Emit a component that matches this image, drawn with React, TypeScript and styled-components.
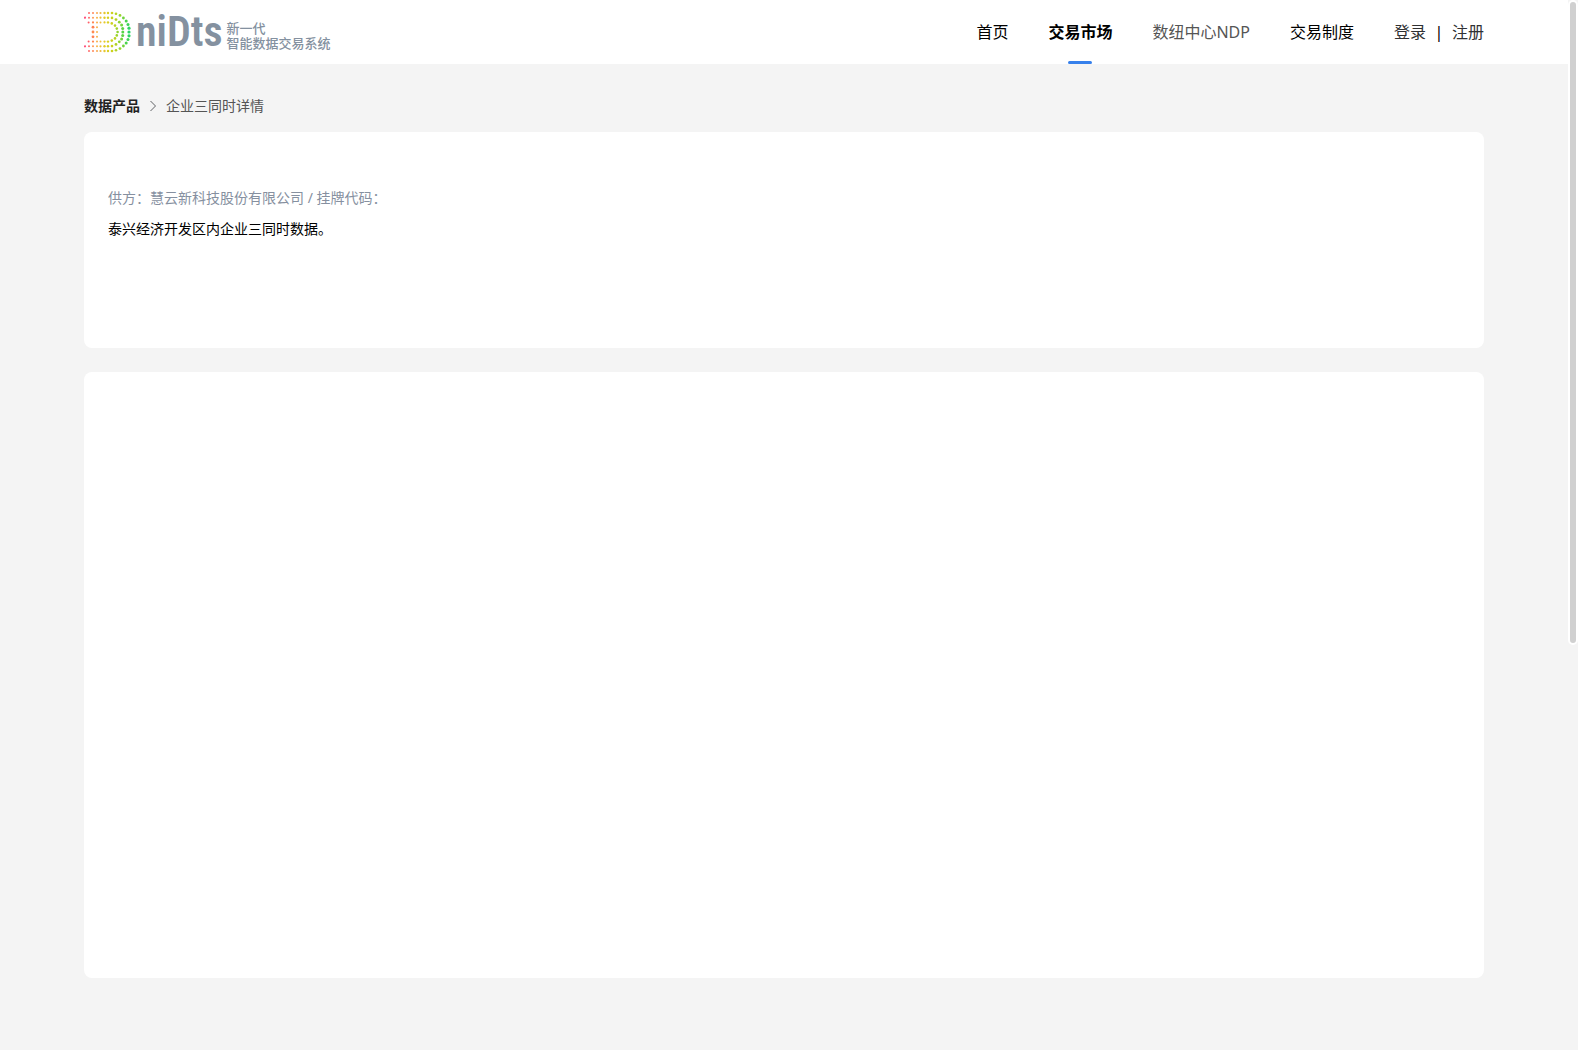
import React from "react";
import styled, { createGlobalStyle } from "styled-components";

const GlobalStyle = createGlobalStyle`
  * { box-sizing: border-box; }
  body {
    margin: 0;
    background: #f4f4f4;
    color: #000;
    font-family: "Noto Sans", "Noto Sans CJK SC", sans-serif;
    font-size: 14px;
    line-height: 20px;
  }
  a { color: inherit; text-decoration: none; }
  p { margin: 0; }
`;

const Shell = styled.div`
  display: grid;
  grid-template-columns: minmax(0, 1fr) 10px;
  min-height: 100vh;
`;

const Page = styled.div`
  display: flex;
  flex-direction: column;
`;

const Container = styled.div`
  width: 100%;
  max-width: 1400px;
  margin: 0 auto;
`;

const Header = styled.header`
  background: #fff;
`;

const HeaderInner = styled(Container)`
  display: flex;
  align-items: center;
  justify-content: space-between;
  height: 64px;
`;

const Brand = styled.a`
  display: flex;
  align-items: center;
  color: #8491a0;
`;

const Wordmark = styled.span`
  margin-left: 4px;
  font-family: "Roboto Condensed", "Liberation Sans Narrow", "Roboto", sans-serif;
  font-size: 42px;
  font-weight: 600;
  line-height: 64px;
`;

const Tagline = styled.span`
  display: flex;
  flex-direction: column;
  margin-left: 4px;
  padding-top: 8px;
  font-size: 13px;
  font-weight: 500;
  line-height: 15px;
`;

const Nav = styled.nav`
  display: flex;
  gap: 40px;
  font-size: 16px;
  line-height: 64px;
`;

const NavLink = styled.a<{ $active?: boolean; $color?: string }>`
  position: relative;
  color: ${(p) => p.$color ?? "#000"};
  font-weight: ${(p) => (p.$active ? 700 : 400)};

  &::after {
    content: "";
    display: ${(p) => (p.$active ? "block" : "none")};
    position: absolute;
    bottom: 0;
    left: calc(50% - 12px);
    width: 24px;
    height: 3px;
    border-radius: 2px;
    background: #3680eb;
  }
`;

const Account = styled.div`
  display: flex;
  gap: 8px;
  color: #303133;
`;

const Separator = styled.span`
  width: 10px;
  color: #000;
  text-align: center;
`;

const Breadcrumb = styled.nav`
  display: flex;
  align-items: center;
  gap: 8px;
  padding: 32px 0 16px;
  color: #555;

  a { color: #222; font-weight: 700; }
`;

const Main = styled(Container).attrs({ as: "main" })`
  display: flex;
  flex-direction: column;
`;

const Card = styled.section<{ $minHeight: number }>`
  min-height: ${(p) => p.$minHeight}px;
  padding: 56px 24px;
  border-radius: 8px;
  background: #fff;

  & + & { margin-top: 24px; }
`;

const Supplier = styled.p`
  color: #8690a0;
`;

const Description = styled.p`
  margin-top: 11px;
`;

const ScrollRail = styled.div`
  height: 100vh;
`;

const ScrollThumb = styled.div`
  height: 645px;
  border: 2px solid #fff;
  border-radius: 5px;
  background: #d0d0d0;
`;

// Upper half of the dotted "D"; every dot is mirrored below the centre line at y = 24.
const dots: [number, number, number, string][] = [
  [5, 5, 1, "#ff6b6b"], [9, 5, 1, "#ff8759"], [13, 5, 1, "#f7a64c"], [16.5, 5, 1.1, "#efb93c"],
  [20.5, 5, 1.2, "#e6c62e"], [24, 5, 1.2, "#dbcf22"], [28, 5, 1.3, "#cdd11c"], [32, 5.7, 1.3, "#b4d323"],
  [36, 7.4, 1.4, "#97d52d"], [39.4, 10, 1.4, "#6fd43b"], [42.2, 13, 1.5, "#4ad34b"], [44, 16.5, 1.5, "#3ad456"],
  [45, 20.2, 1.6, "#2dd561"],
  [1, 9.7, 1.1, "#ff4f7d"], [5, 9.7, 1, "#ff6b68"], [9, 9.7, 1, "#ff9853"], [13, 9.7, 1, "#f7b547"],
  [16.5, 9.7, 1.1, "#ecc034"], [20.5, 9.7, 1.2, "#e2cb26"], [24, 9.7, 1.2, "#d5d01d"], [28, 9.9, 1.3, "#c9d11c"],
  [32, 11.6, 1.4, "#b0d123"], [35.3, 14.2, 1.4, "#8ed331"], [37.6, 17, 1.5, "#70d53c"], [38.7, 20.4, 1.5, "#5bd444"],
  [4.6, 14.4, 1, "#ff5e68"], [9, 14.4, 1.1, "#ff8650"], [13, 14.4, 1, "#f9ac47"], [16.5, 14.4, 1, "#efbf36"],
  [20.5, 14.4, 1.1, "#e4c928"], [24, 14.4, 1.2, "#dad021"], [27.8, 15.4, 1.3, "#ccd11c"], [31, 17.6, 1.3, "#b9d321"],
  [32.8, 20.6, 1.3, "#9dd32a"],
  [9, 19.2, 1.4, "#ff8054"], [13, 19.2, 1, "#f7b34a"],
];

const centerDots: [number, number, number, string][] = [
  [9, 24, 1.4, "#ff8a4f"], [13, 24, 1, "#f7b34a"], [33.6, 24, 1.3, "#8fd42d"],
  [38.8, 24, 1.5, "#56d446"], [45, 24, 1.6, "#29d365"],
];

const LogoMark = () => (
  <svg width="48" height="48" viewBox="0 0 48 48" aria-hidden="true">
    {dots.map(([x, y, r, fill]) => (
      <React.Fragment key={`${x}-${y}`}>
        <circle cx={x} cy={y} r={r} fill={fill} />
        <circle cx={x} cy={48 - y} r={r} fill={fill} />
      </React.Fragment>
    ))}
    {centerDots.map(([x, y, r, fill]) => (
      <circle key={x} cx={x} cy={y} r={r} fill={fill} />
    ))}
  </svg>
);

const Chevron = () => (
  <svg width="10" height="14" viewBox="0 0 10 14" fill="none" stroke="#606266" aria-hidden="true">
    <path d="M2.5 2 7.5 7 2.5 12" />
  </svg>
);

export default function App() {
  return (
    <>
      <GlobalStyle />
      <Shell>
        <Page>
          <Header>
            <HeaderInner>
              <Brand href="#">
                <LogoMark />
                <Wordmark>niDts</Wordmark>
                <Tagline>
                  <span>新一代</span>
                  <span>智能数据交易系统</span>
                </Tagline>
              </Brand>
              <Nav>
                <NavLink href="#">首页</NavLink>
                <NavLink href="#" $active>交易市场</NavLink>
                <NavLink href="#" $color="#555">数纽中心NDP</NavLink>
                <NavLink href="#">交易制度</NavLink>
                <Account>
                  <a href="#">登录</a>
                  <Separator>|</Separator>
                  <a href="#">注册</a>
                </Account>
              </Nav>
            </HeaderInner>
          </Header>
          <Main>
            <Breadcrumb>
              <a href="#">数据产品</a>
              <Chevron />
              <span>企业三同时详情</span>
            </Breadcrumb>
            <Card $minHeight={216}>
              <Supplier>供方：慧云新科技股份有限公司 / 挂牌代码：</Supplier>
              <Description>泰兴经济开发区内企业三同时数据。</Description>
            </Card>
            <Card $minHeight={606} />
          </Main>
        </Page>
        <ScrollRail aria-hidden="true">
          <ScrollThumb />
        </ScrollRail>
      </Shell>
    </>
  );
}
